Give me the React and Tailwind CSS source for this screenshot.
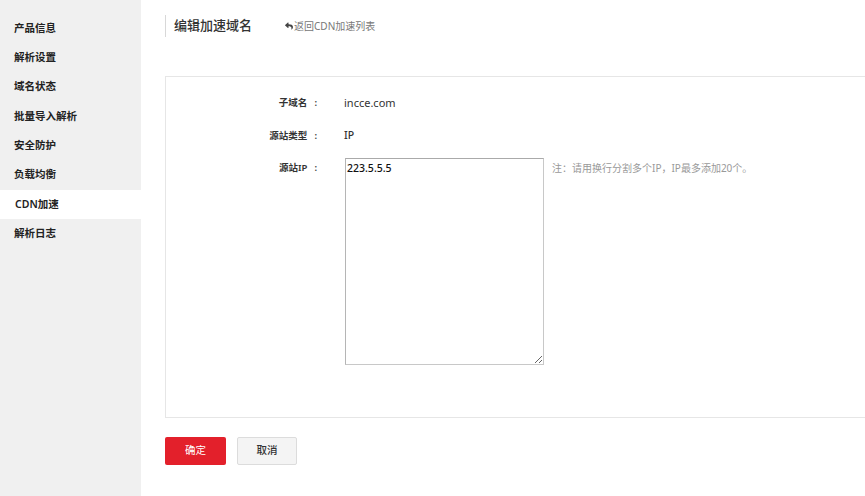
import React from 'react';
import { FaReply } from 'react-icons/fa';

const font = { fontFamily: '"Noto Sans", "Noto Sans CJK SC", sans-serif' };

const menu = ['产品信息', '解析设置', '域名状态', '批量导入解析', '安全防护', '负载均衡', 'CDN加速', '解析日志'];

function Sidebar() {
    return (
        <div className="w-[141px] shrink-0 bg-[#f0f0f0] pt-[14px]">
            {menu.map((m) => (
                <div
                    key={m}
                    className={`h-[29.3px] flex items-center text-[10.5px] font-semibold text-[#222] ${m === 'CDN加速' ? 'bg-white pl-[15px] text-[#111]' : 'pl-[14px]'}`}
                >
                    {m}
                </div>
            ))}
        </div>
    );
}

// label column, right aligned, colon set apart like the original
function Label({ children }) {
    return (
        <div className="w-[151px] flex justify-end items-center text-[9.5px] font-semibold text-[#333]">
            {children}
            <span className="ml-[7px]">:</span>
        </div>
    );
}

export default function App() {
    return (
        <div className="w-[865px] h-[496px] overflow-hidden flex bg-white" style={font}>
            <Sidebar />

            <div className="flex-1 pl-[24px] pt-[15px]">
                {/* Header */}
                <div className="flex items-center h-[22px] border-l border-[#d8d8d8] pl-[8px]">
                    <span className="text-[13px] font-medium text-[#333]">编辑加速域名</span>
                    <span className="ml-[33px] flex items-center text-[10px] text-[#777]">
                        <FaReply className="w-[8px] h-[8px] text-[#444] mr-[1px]" />
                        返回CDN加速列表
                    </span>
                </div>

                {/* Form box */}
                <div className="mt-[39px] w-[760px] h-[342px] border border-[#e6e6e6] pt-[9.5px]">
                    <div className="flex items-center h-[33px]">
                        <Label>子域名</Label>
                        <span className="ml-[27px] text-[11px] text-[#333]">incce.com</span>
                    </div>
                    <div className="flex items-center h-[33px]">
                        <Label>源站类型</Label>
                        <span className="ml-[27px] text-[10.5px] font-medium text-[#333]">IP</span>
                    </div>
                    <div className="flex items-start">
                        <div className="pt-[8.5px]">
                            <Label>源站IP</Label>
                        </div>
                        <textarea
                            defaultValue="223.5.5.5"
                            className="mt-[5.5px] ml-[28px] w-[199px] h-[207px] border border-[#c8c8c8] border-t-[#aaa] border-l-[#b5b5b5] px-[1px] pt-[2px] text-[10.5px] font-medium text-[#111] outline-none resize"
                            style={font}
                        />
                        <span className="ml-[8px] pt-[8px] text-[10px] text-[#999]">注：请用换行分割多个IP，IP最多添加20个。</span>
                    </div>
                </div>

                {/* Buttons */}
                <div className="flex gap-[11px] mt-[19px]">
                    <button className="w-[61px] h-[28px] rounded-[2px] bg-[#e3202b] text-white text-[10.5px]">确定</button>
                    <button className="w-[60px] h-[28px] rounded-[2px] bg-[#f4f4f4] border border-[#dcdcdc] text-[#333] text-[10.5px] font-medium">取消</button>
                </div>
            </div>
        </div>
    );
}
